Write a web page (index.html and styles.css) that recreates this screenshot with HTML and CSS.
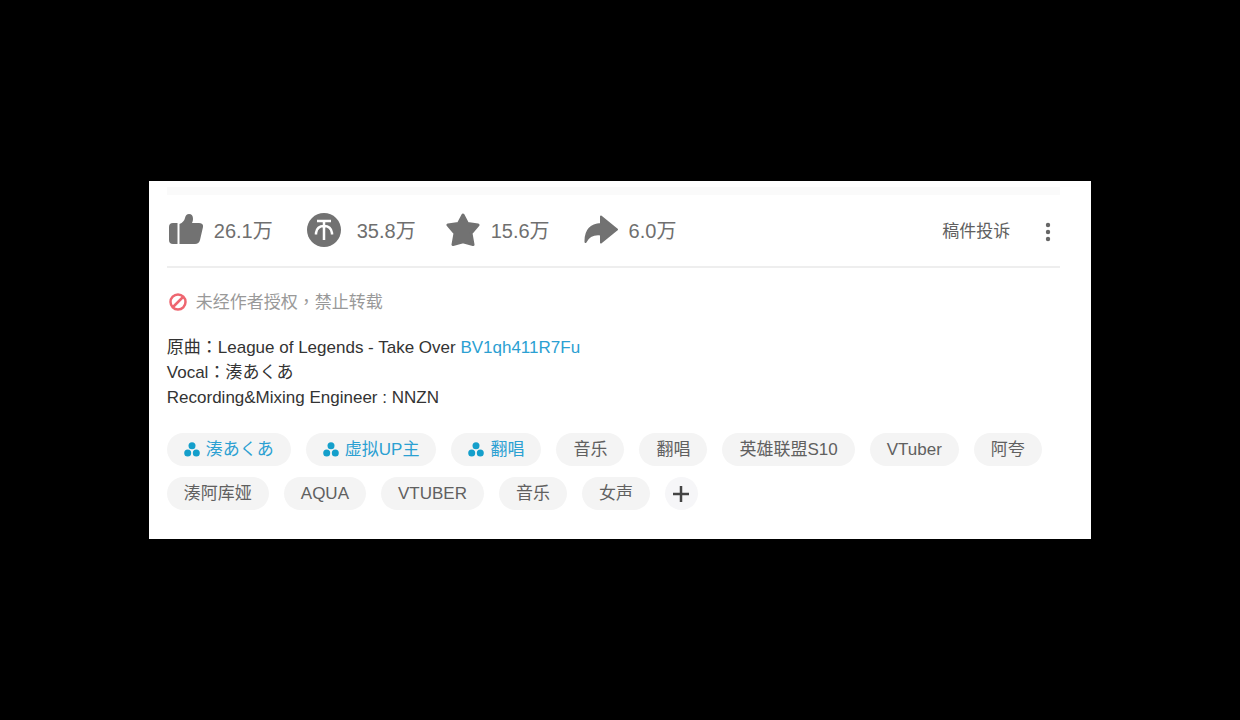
FILE: index.html
```html
<!DOCTYPE html>
<html lang="zh-CN">
<head>
<meta charset="utf-8">
<title>League of Legends - Take Over</title>
<meta name="viewport" content="width=device-width, initial-scale=1">
<link rel="stylesheet" href="styles.css">
</head>
<body>
<main class="card">
  <div class="toolbar">
    <button class="stat stat-like" type="button">
      <svg class="stat-icon" viewBox="0 0 34 34" aria-hidden="true"><path d="M4 10h4.500v21H4q-4 0-4-4V14q0-4 4-4z"/><path d="M10.500 31V11q4.500-2 5.500-6 .8-4 4-4 4 0 4 5 0 2-1 4h7q4.500 0 4 4l-3 13q-1 4-5 4z"/></svg>
      <span>26.1万</span>
    </button>
    <button class="stat stat-coin" type="button">
      <svg class="stat-icon" viewBox="0 0 34 34" aria-hidden="true"><circle cx="17" cy="17" r="17"/><path class="coin-mark" d="M10 8h14M17 8v19M9 21.500v-1.500q1-7 8-7t8 7v1.500"/></svg>
      <span>35.8万</span>
    </button>
    <button class="stat stat-star" type="button">
      <svg class="stat-icon" viewBox="0 0 34 34" aria-hidden="true"><path class="rounded" d="M17 2l4.600 8.600L32 12l-7 8.200L27 31.500 17 28.800 7 31.500l2-11.300L2 12l10.400-1.400z"/></svg>
      <span>15.6万</span>
    </button>
    <button class="stat stat-share" type="button">
      <svg class="stat-icon" viewBox="0 0 34 34" aria-hidden="true"><path class="rounded" d="M17 3.500L33 16.500 17 29.500v-8Q6 20 1.500 29 1 12 17 11z"/></svg>
      <span>6.0万</span>
    </button>
    <button class="report" type="button">稿件投诉</button>
    <button class="more" type="button" aria-label="更多"><svg viewBox="0 0 6 20" aria-hidden="true"><circle cx="3" cy="3" r="2.200"/><circle cx="3" cy="10" r="2.200"/><circle cx="3" cy="17" r="2.200"/></svg></button>
  </div>
  <p class="notice">
    <svg class="notice-icon" viewBox="0 0 18 18" aria-hidden="true"><circle cx="9" cy="9" r="7.500"/><path d="M4 14L14 4"/></svg>
    <span>未经作者授权<span class="mark" lang="zh-TW">，</span>禁止转载</span>
  </p>
  <div class="desc">
    <p>原曲<span class="mark" lang="zh-TW">：</span>League of Legends - Take Over <a href="#">BV1qh411R7Fu</a></p>
    <p>Vocal<span class="mark" lang="zh-TW">：</span>湊あくあ</p>
    <p>Recording&amp;Mixing Engineer : NNZN</p>
  </div>
  <nav class="tags">
    <a class="tag tag-topic" href="#"><svg viewBox="0 0 16 15" aria-hidden="true"><circle cx="8" cy="3.800" r="3.500"/><circle cx="3.700" cy="11" r="3.500"/><circle cx="12.300" cy="11" r="3.500"/></svg>湊あくあ</a>
    <a class="tag tag-topic" href="#"><svg viewBox="0 0 16 15" aria-hidden="true"><circle cx="8" cy="3.800" r="3.500"/><circle cx="3.700" cy="11" r="3.500"/><circle cx="12.300" cy="11" r="3.500"/></svg>虚拟UP主</a>
    <a class="tag tag-topic" href="#"><svg viewBox="0 0 16 15" aria-hidden="true"><circle cx="8" cy="3.800" r="3.500"/><circle cx="3.700" cy="11" r="3.500"/><circle cx="12.300" cy="11" r="3.500"/></svg>翻唱</a>
    <a class="tag" href="#">音乐</a>
    <a class="tag" href="#">翻唱</a>
    <a class="tag" href="#">英雄联盟S10</a>
    <a class="tag" href="#">VTuber</a>
    <a class="tag" href="#">阿夸</a>
    <a class="tag" href="#">湊阿库娅</a>
    <a class="tag" href="#">AQUA</a>
    <a class="tag" href="#">VTUBER</a>
    <a class="tag" href="#">音乐</a>
    <a class="tag" href="#">女声</a>
    <button class="add" type="button" aria-label="添加标签"><svg viewBox="0 0 18 18" aria-hidden="true"><path d="M9 1v16M1 9h16"/></svg></button>
  </nav>
</main>
</body>
</html>
```
FILE: styles.css
```css
* {
  box-sizing: border-box;
}

body {
  margin: 0;
  min-height: 100vh;
  display: flex;
  align-items: center;
  justify-content: center;
  background: #000;
  color: #333;
  font: 17px/25px "Liberation Sans", "Noto Sans CJK SC", sans-serif;
}

p {
  margin: 0;
}

a {
  color: #2ba0d2;
  text-decoration: none;
}

button {
  border: 0;
  padding: 0;
  background: none;
  color: inherit;
  font: inherit;
  cursor: pointer;
}

.card {
  width: 76%;
  padding: 6px 31px 29px 18px;
  background: #fff;
}

.toolbar {
  display: flex;
  align-items: center;
  height: 81px;
  padding: 2px 9px 0 2px;
  border-top: 8px solid #fafafa;
  border-bottom: 2px solid #eee;
  color: #6f6f6f;
}

.stat {
  display: flex;
  align-items: center;
  gap: 11px;
  margin-right: 34px;
  font-size: 20px;
}

.stat-coin {
  gap: 16px;
  margin-right: 30px;
}

.stat-icon {
  width: 34px;
  height: 34px;
  margin-bottom: 4px;
  fill: #727272;
}

.rounded {
  stroke: #727272;
  stroke-width: 3;
  stroke-linejoin: round;
}

.stat-share .rounded {
  stroke-width: 2;
}

.coin-mark {
  fill: none;
  stroke: #fff;
  stroke-width: 2.500;
}

.report {
  margin-left: auto;
  color: #606060;
}

.more {
  display: flex;
  margin-left: 35px;
}

.more svg {
  width: 6px;
  height: 20px;
  fill: #666;
}

.notice {
  display: flex;
  align-items: center;
  gap: 9px;
  margin: 22px 0 20px;
  padding-left: 2px;
  color: #999;
}

.notice-icon {
  width: 18px;
  height: 18px;
  margin-bottom: 2px;
  fill: none;
  stroke: #ee6670;
  stroke-width: 2.500;
}

.mark {
  font-family: "Noto Sans CJK TC", sans-serif;
  line-height: 1;
}

.tags {
  display: flex;
  flex-wrap: wrap;
  gap: 11px 15px;
  margin-top: 23px;
}

.tag {
  display: flex;
  align-items: center;
  gap: 6px;
  height: 33px;
  padding: 0 17px;
  border-radius: 17px;
  background: #f4f4f4;
  color: #606060;
}

.tag-topic {
  color: #2ba0d2;
}

.tag-topic svg {
  width: 16px;
  height: 15px;
  fill: #149fcb;
}

.add {
  display: flex;
  align-items: center;
  justify-content: center;
  width: 33px;
  height: 33px;
  border-radius: 50%;
  background: #f6f6f8;
}

.add svg {
  width: 18px;
  height: 18px;
  stroke: #444;
  stroke-width: 2.500;
}
```
